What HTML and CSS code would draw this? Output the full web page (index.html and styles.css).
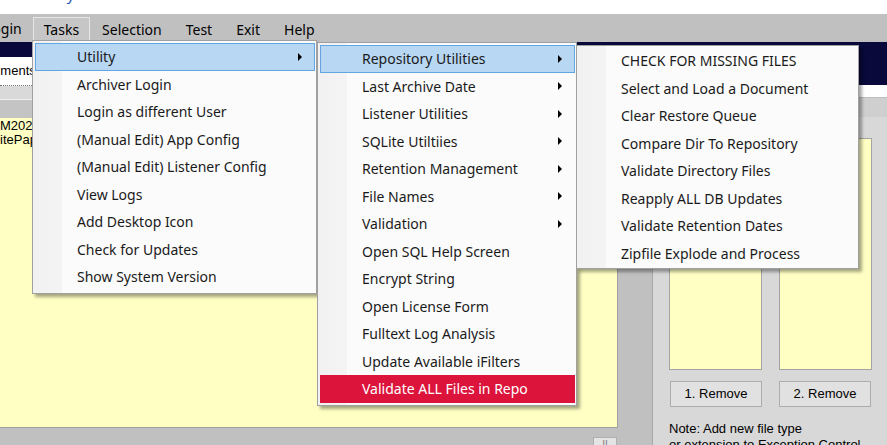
FILE: index.html
```html
<!DOCTYPE html>
<html>
<head>
<meta charset="utf-8">
<title>Tasks menu</title>
<link rel="stylesheet" href="styles.css">
</head>
<body>
<div class="app">
  <div class="titlebar"><span class="title-text">Security</span></div>
  <div class="menubar">
    <span class="mb-item mb-first">Login</span>
    <span class="mb-item mb-open">Tasks</span>
    <span class="mb-item">Selection</span>
    <span class="mb-item">Test</span>
    <span class="mb-item">Exit</span>
    <span class="mb-item">Help</span>
  </div>
  <div class="main">
    <div class="left">
      <div class="navy"></div>
      <div class="docrow"><span class="doctext">Documents</span></div>
      <div class="lgray1"></div>
      <div class="lgray2"></div>
      <div class="yellow-area">
        <div class="ytext">M2020-Library</div>
        <div class="ytext">itePapers</div>
      </div>
      <div class="statusbar"><span class="mini-btn">ıı</span></div>
    </div>
    <div class="right">
      <div class="rnavy"></div>
      <div class="rwhite"></div>
      <div class="rgray"></div>
      <div class="rbody">
        <div class="sep"></div>
        <div class="panel">
          <div class="boxes"><div class="ybox"></div><div class="ybox"></div></div>
          <div class="btns"><span class="btn">1. Remove</span><span class="btn">2. Remove</span></div>
          <div class="note">Note: Add new file type<br>or extension to Exception Control</div>
        </div>
      </div>
    </div>
  </div>

  <div class="menu menu1">
    <div class="mi hl">Utility<span class="arrow"></span></div>
    <div class="mi">Archiver Login</div>
    <div class="mi">Login as different User</div>
    <div class="mi">(Manual Edit) App Config</div>
    <div class="mi">(Manual Edit) Listener Config</div>
    <div class="mi">View Logs</div>
    <div class="mi">Add Desktop Icon</div>
    <div class="mi">Check for Updates</div>
    <div class="mi">Show System Version</div>
  </div>

  <div class="menu menu2">
    <div class="mi hl">Repository Utilities<span class="arrow"></span></div>
    <div class="mi">Last Archive Date<span class="arrow"></span></div>
    <div class="mi">Listener Utilities<span class="arrow"></span></div>
    <div class="mi">SQLite Utiltiies<span class="arrow"></span></div>
    <div class="mi">Retention Management<span class="arrow"></span></div>
    <div class="mi">File Names<span class="arrow"></span></div>
    <div class="mi">Validation<span class="arrow"></span></div>
    <div class="mi">Open SQL Help Screen</div>
    <div class="mi">Encrypt String</div>
    <div class="mi">Open License Form</div>
    <div class="mi">Fulltext Log Analysis</div>
    <div class="mi">Update Available iFilters</div>
    <div class="mi red">Validate ALL Files in Repo</div>
  </div>

  <div class="menu menu3">
    <div class="mi">CHECK FOR MISSING FILES</div>
    <div class="mi">Select and Load a Document</div>
    <div class="mi">Clear Restore Queue</div>
    <div class="mi">Compare Dir To Repository</div>
    <div class="mi">Validate Directory Files</div>
    <div class="mi">Reapply ALL DB Updates</div>
    <div class="mi">Validate Retention Dates</div>
    <div class="mi">Zipfile Explode and Process</div>
  </div>
</div>
</body>
</html>
```
FILE: styles.css
```css
* { box-sizing: border-box; }
html, body { margin: 0; padding: 0; }
body {
  width: 887px;
  height: 445px;
  overflow: hidden;
  background: #ffffff;
  font-family: "Noto Sans", "Open Sans", sans-serif;
}
.app {
  position: relative;
  width: 887px;
  height: 445px;
  overflow: hidden;
}

/* top strip */
.titlebar {
  height: 14px;
  overflow: hidden;
  background: #ffffff;
}
.title-text {
  display: block;
  margin-top: -16px;
  padding-left: 18px;
  font-size: 15px;
  line-height: 20px;
  color: #1d4fb0;
}

/* menubar */
.menubar {
  height: 28px;
  background: #c0c0c0;
  display: flex;
  align-items: flex-end;
  font-size: 14px;
  color: #000;
  white-space: nowrap;
}
.mb-item {
  height: 25px;
  line-height: 23px;
  padding: 0 11px;
  border: 1px solid transparent;
  border-bottom: 0;
}
.mb-first {
  margin-left: -15px;
  padding: 0 11px 0 0;
  border: 0;
}
.mb-open {
  padding: 0 10px;
  background: #c6c6c6;
  border-color: #e6e6e6;
}

/* main background layout */
.main {
  display: grid;
  grid-template-columns: 618px 269px;
  height: 403px;
}
.left, .right {
  display: flex;
  flex-direction: column;
  min-height: 0;
}
.navy {
  height: 15px;
  background: #09093b;
  flex: none;
}
.docrow {
  height: 29px;
  flex: none;
  background: #ffffff;
  border-bottom: 1px dotted #777;
  font-family: "Liberation Sans", Arial, sans-serif;
  font-size: 13px;
  line-height: 27px;
  overflow: hidden;
  white-space: nowrap;
}
.doctext { margin-left: -30px; color: #000; }
.lgray1 { height: 14px; flex: none; background: #d9d9d9; border-bottom: 1px solid #eeeeee; }
.lgray2 { height: 18px; flex: none; background: #c4c4c4; }
.yellow-area {
  flex: 1;
  background: #ffffc4;
  border-right: 1px solid #a0a0a0;
  border-bottom: 1px solid #a0a0a0;
  padding-top: 1px;
  font-family: "Liberation Sans", Arial, sans-serif;
  font-size: 13px;
  line-height: 14px;
  color: #000;
  overflow: hidden;
  white-space: nowrap;
}
.statusbar {
  height: 17px;
  flex: none;
  background: #c0c0c0;
  display: flex;
  justify-content: flex-end;
  align-items: flex-start;
  padding-top: 9px;
  padding-right: 1px;
}
.mini-btn {
  width: 24px;
  height: 12px;
  background: #e4e4e4;
  border: 1px solid #b0b0b0;
  font-family: "Liberation Sans", Arial, sans-serif;
  font-size: 10px;
  line-height: 10px;
  color: #777;
  text-align: center;
}

.rnavy { height: 43px; flex: none; background: #09093b; }
.rwhite { height: 12px; flex: none; background: #ffffff; }
.rgray {
  height: 20px;
  flex: none;
  background: #cfcfcf;
  border-top: 1px solid #bdbdbd;
}
.rbody {
  flex: 1;
  display: flex;
  min-height: 0;
}
.sep {
  width: 34px;
  background: #c0c0c0;
  flex: none;
}
.panel {
  flex: 1;
  background: #d8d8d8;
  border-left: 1px solid #a8a8a8;
  padding: 21px 0 0 16px;
  font-family: "Liberation Sans", Arial, sans-serif;
  font-size: 13px;
  color: #000;
  overflow: hidden;
}
.boxes {
  display: flex;
  gap: 17px;
}
.ybox {
  width: 93px;
  height: 232px;
  background: #ffffc4;
  border: 1px solid #a4a4a4;
}
.btns {
  display: flex;
  gap: 17px;
  margin-top: 11px;
  padding-left: 1px;
}
.btn {
  width: 92px;
  height: 26px;
  background: #e1e1e1;
  border: 1px solid #adadad;
  text-align: center;
  line-height: 24px;
}
.note {
  margin-top: 14px;
  line-height: 16px;
  white-space: nowrap;
}

/* dropdown menus */
.menu {
  position: absolute;
  background: linear-gradient(to right, #f1f1f1 0, #f4f4f4 29px, #fbfbfb 29px);
  border: 1px solid #a0a0a0;
  padding: 2px 0;
  box-shadow: 3px 3px 3px rgba(0, 0, 0, 0.35);
  font-size: 14px;
  color: #1a1a1a;
}
.menu1 { left: 32px; top: 40px; width: 285px; z-index: 1; }
.menu2 { left: 317px; top: 42px; width: 260px; z-index: 2; }
.menu3 { left: 576px; top: 45px; width: 283px; z-index: 3; padding: 1px 0; }
.mi {
  height: 27.5px;
  line-height: 25px;
  margin: 0 1px 0 2px;
  border: 1px solid transparent;
  padding: 0 12px 0 41px;
  display: flex;
  align-items: center;
  white-space: nowrap;
}
.mi.hl {
  background: #b7d7f3;
  border-color: #62a4e4;
}
.mi.red {
  background: #dc143c;
  border-color: #dc143c;
  color: #ffffff;
}
.arrow {
  margin-left: auto;
  width: 0;
  height: 0;
  border-left: 4px solid #000;
  border-top: 4px solid transparent;
  border-bottom: 4px solid transparent;
}
```
